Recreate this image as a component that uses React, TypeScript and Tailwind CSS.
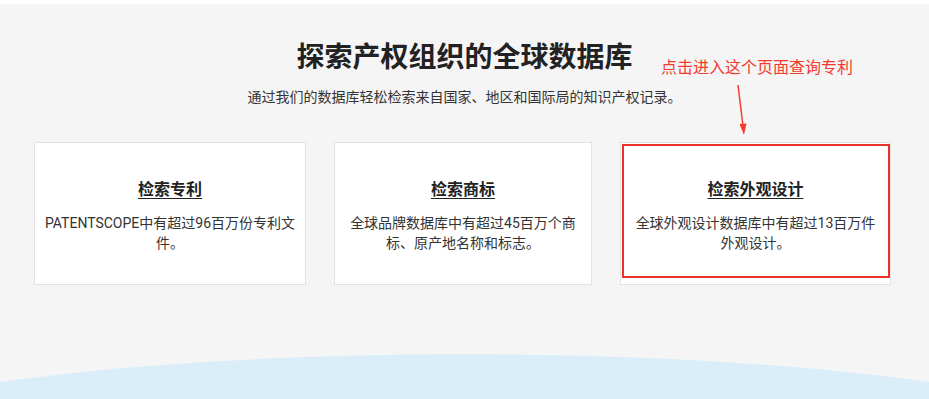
const cards = [
  { title: '检索专利', text: 'PATENTSCOPE中有超过96百万份专利文件。', w: 'w-[272px] px-[5px]' },
  { title: '检索商标', text: '全球品牌数据库中有超过45百万个商标、原产地名称和标志。', w: 'w-[258px] px-[14px]' },
  { title: '检索外观设计', text: '全球外观设计数据库中有超过13百万件外观设计。', w: 'w-[271px] px-[12px]', marked: true },
];

export default function App() {
  return (
    <div className="relative w-[929px] h-[399px] overflow-hidden bg-white font-['Roboto','Noto_Sans_CJK_SC',sans-serif] text-[#333]">
      <div className="mt-[4px] h-[395px] bg-[#f5f5f5] flex flex-col items-center">
        <h1 className="pt-[34px] text-[28px] leading-[40px] font-bold text-[#222]">探索产权组织的全球数据库</h1>
        <p className="mt-[9px] text-[14px] leading-[20px] text-[#333]">
          通过我们的数据库轻松检索来自国家、地区和国际局的知识产权记录。
        </p>

        <div className="mt-[35px] flex gap-[28px] pr-[4px]">
          {cards.map((c) => (
            <div
              key={c.title}
              className={`relative ${c.w} h-[143px] bg-white border border-[#e2e2e2] flex flex-col items-center pt-[35px] text-center`}
            >
              <a href="#" className="text-[16px] leading-[24px] font-bold text-[#222] underline underline-offset-[3px]">
                {c.title}
              </a>
              <p className="mt-[11px] text-[14px] leading-[20px] text-[#333]">{c.text}</p>
              {c.marked && (
                <div className="absolute left-[1px] top-[1px] w-[268px] h-[134px] border-2 border-[#e8322a]" />
              )}
            </div>
          ))}
        </div>

        <svg className="mt-auto block" width="929" height="45" viewBox="0 0 929 45">
          <path d="M0 28 C 260 -9 669 -9 929 28 L929 45 L0 45 Z" fill="#d9eef9" />
        </svg>
      </div>

      {/* annotation */}
      <div className="absolute left-[661px] top-[58px] text-[16px] leading-[20px] text-[#f33a2f]">
        点击进入这个页面查询专利
      </div>
      <svg className="absolute left-[730px] top-[82px]" width="24" height="56" viewBox="0 0 24 56">
        <line x1="8" y1="3" x2="13" y2="44" stroke="#f33a2f" strokeWidth="1.5" />
        <path d="M9.5 42 L14 53 L16.5 41.5 Z" fill="#f33a2f" />
      </svg>
    </div>
  );
}
